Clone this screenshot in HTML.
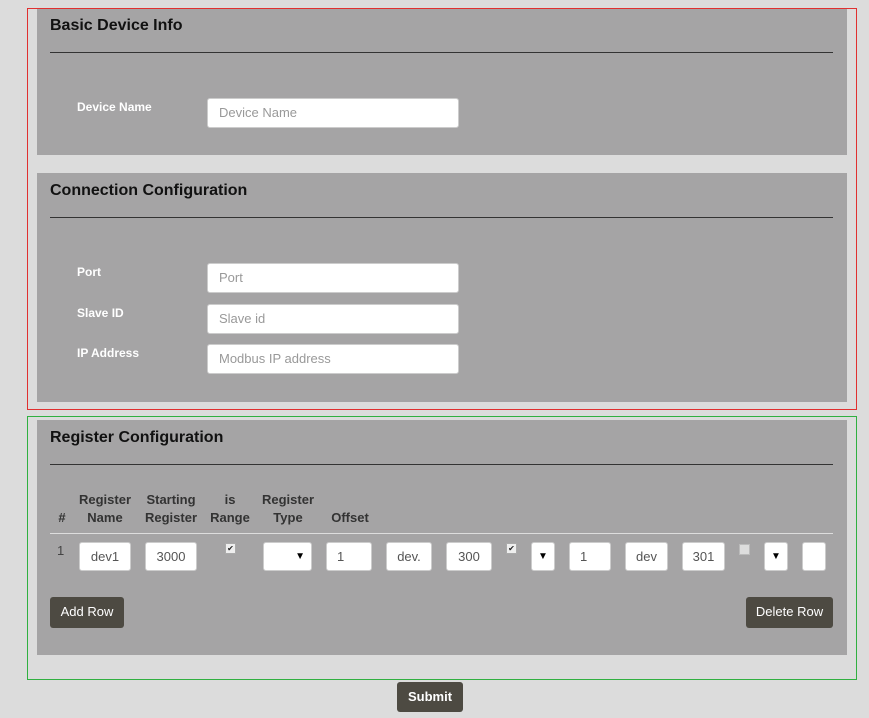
<!DOCTYPE html>
<html><head><style>
body{margin:0;width:869px;height:718px;background:#dcdcdc;font-family:"Liberation Sans",sans-serif;position:relative;overflow:hidden}
.a{position:absolute}
.panel{position:absolute;left:37px;width:810px;background:#a5a4a5}
h2{position:absolute;left:13px;margin:0;font-size:16px;font-weight:bold;color:#111}
.hr{position:absolute;left:13px;width:783px;height:1px;background:#333}
.lbl{position:absolute;font-size:12px;font-weight:bold;color:#fff}
.in{position:absolute;background:#fff;border:1px solid #ccc;border-radius:3px;box-sizing:border-box;font-size:13px;color:#999;padding-left:11px;line-height:28px}
.ti{position:absolute;top:542px;height:29px;background:#fff;border:1px solid #ccc;border-radius:3px;box-sizing:border-box;font-size:13px;color:#555;text-align:center;line-height:27px;overflow:hidden}
.th{position:absolute;font-size:13px;font-weight:bold;color:#333;text-align:center;line-height:18px}
.btn{position:absolute;background:#4d4a42;color:#fff;font-size:13px;border-radius:3px;text-align:center;line-height:30px}
.cb{position:absolute;width:9px;height:9px;background:#eee;border:1px solid #aaa;font-size:8px;line-height:9px;text-align:center;color:#222}
</style></head><body>
<div class="a" style="left:27px;top:8px;width:830px;height:402px;border:1px solid #e03030;box-sizing:border-box"></div>
<div class="a" style="left:27px;top:416px;width:830px;height:264px;border:1px solid #30b040;box-sizing:border-box"></div>

<div class="panel" style="top:9px;height:146px">
<h2 style="top:8px">Basic Device Info</h2><div class="hr" style="top:43px"></div>
<div class="lbl" style="left:40px;top:91px">Device Name</div>
<div class="in" style="left:170px;top:89px;width:252px;height:30px">Device Name</div>
</div>

<div class="panel" style="top:173px;height:229px">
<h2 style="top:9px">Connection Configuration</h2><div class="hr" style="top:44px"></div>
<div class="lbl" style="left:40px;top:92px">Port</div>
<div class="in" style="left:170px;top:90px;width:252px;height:30px">Port</div>
<div class="lbl" style="left:40px;top:133px">Slave ID</div>
<div class="in" style="left:170px;top:131px;width:252px;height:30px">Slave id</div>
<div class="lbl" style="left:40px;top:173px">IP Address</div>
<div class="in" style="left:170px;top:171px;width:252px;height:30px">Modbus IP address</div>
</div>

<div class="panel" style="top:420px;height:235px">
<h2 style="top:9px">Register Configuration</h2><div class="hr" style="top:44px"></div>
</div>
<div class="th" style="left:55px;top:509px;width:14px">#</div>
<div class="th" style="left:75px;top:491px;width:60px">Register<br>Name</div>
<div class="th" style="left:140px;top:491px;width:62px">Starting<br>Register</div>
<div class="th" style="left:205px;top:491px;width:50px">is<br>Range</div>
<div class="th" style="left:258px;top:491px;width:60px">Register<br>Type</div>
<div class="th" style="left:325px;top:509px;width:50px">Offset</div>
<div class="a" style="left:50px;top:533px;width:783px;height:1px;background:#ddd"></div>
<div class="a" style="left:57px;top:543px;font-size:13px;color:#444">1</div>
<div class="ti" style="left:79px;width:52px">dev1</div>
<div class="ti" style="left:145px;width:52px">3000</div>
<div class="cb" style="left:225px;top:543px">✔</div>
<div class="ti" style="left:263px;width:49px;text-align:right;padding-right:6px;font-size:10px;color:#000">▼</div>
<div class="ti" style="left:326px;width:46px;text-align:left;padding-left:10px">1</div>
<div class="ti" style="left:386px;width:46px">dev.</div>
<div class="ti" style="left:446px;width:46px">300</div>
<div class="cb" style="left:506px;top:543px">✔</div>
<div class="ti" style="left:531px;width:24px;font-size:10px;color:#000">▼</div>
<div class="ti" style="left:569px;width:42px;text-align:left;padding-left:10px">1</div>
<div class="ti" style="left:625px;width:43px">dev</div>
<div class="ti" style="left:682px;width:43px">301</div>
<div class="cb" style="left:739px;top:544px;background:#ddd;border-color:#bbb"></div>
<div class="ti" style="left:764px;width:24px;font-size:10px;color:#000">▼</div>
<div class="ti" style="left:802px;width:24px"></div>
<div class="btn" style="left:50px;top:597px;width:74px;height:31px">Add Row</div>
<div class="btn" style="left:746px;top:597px;width:87px;height:31px">Delete Row</div>
<div class="btn" style="left:397px;top:682px;width:66px;height:30px;font-weight:bold">Submit</div>
</body></html>
